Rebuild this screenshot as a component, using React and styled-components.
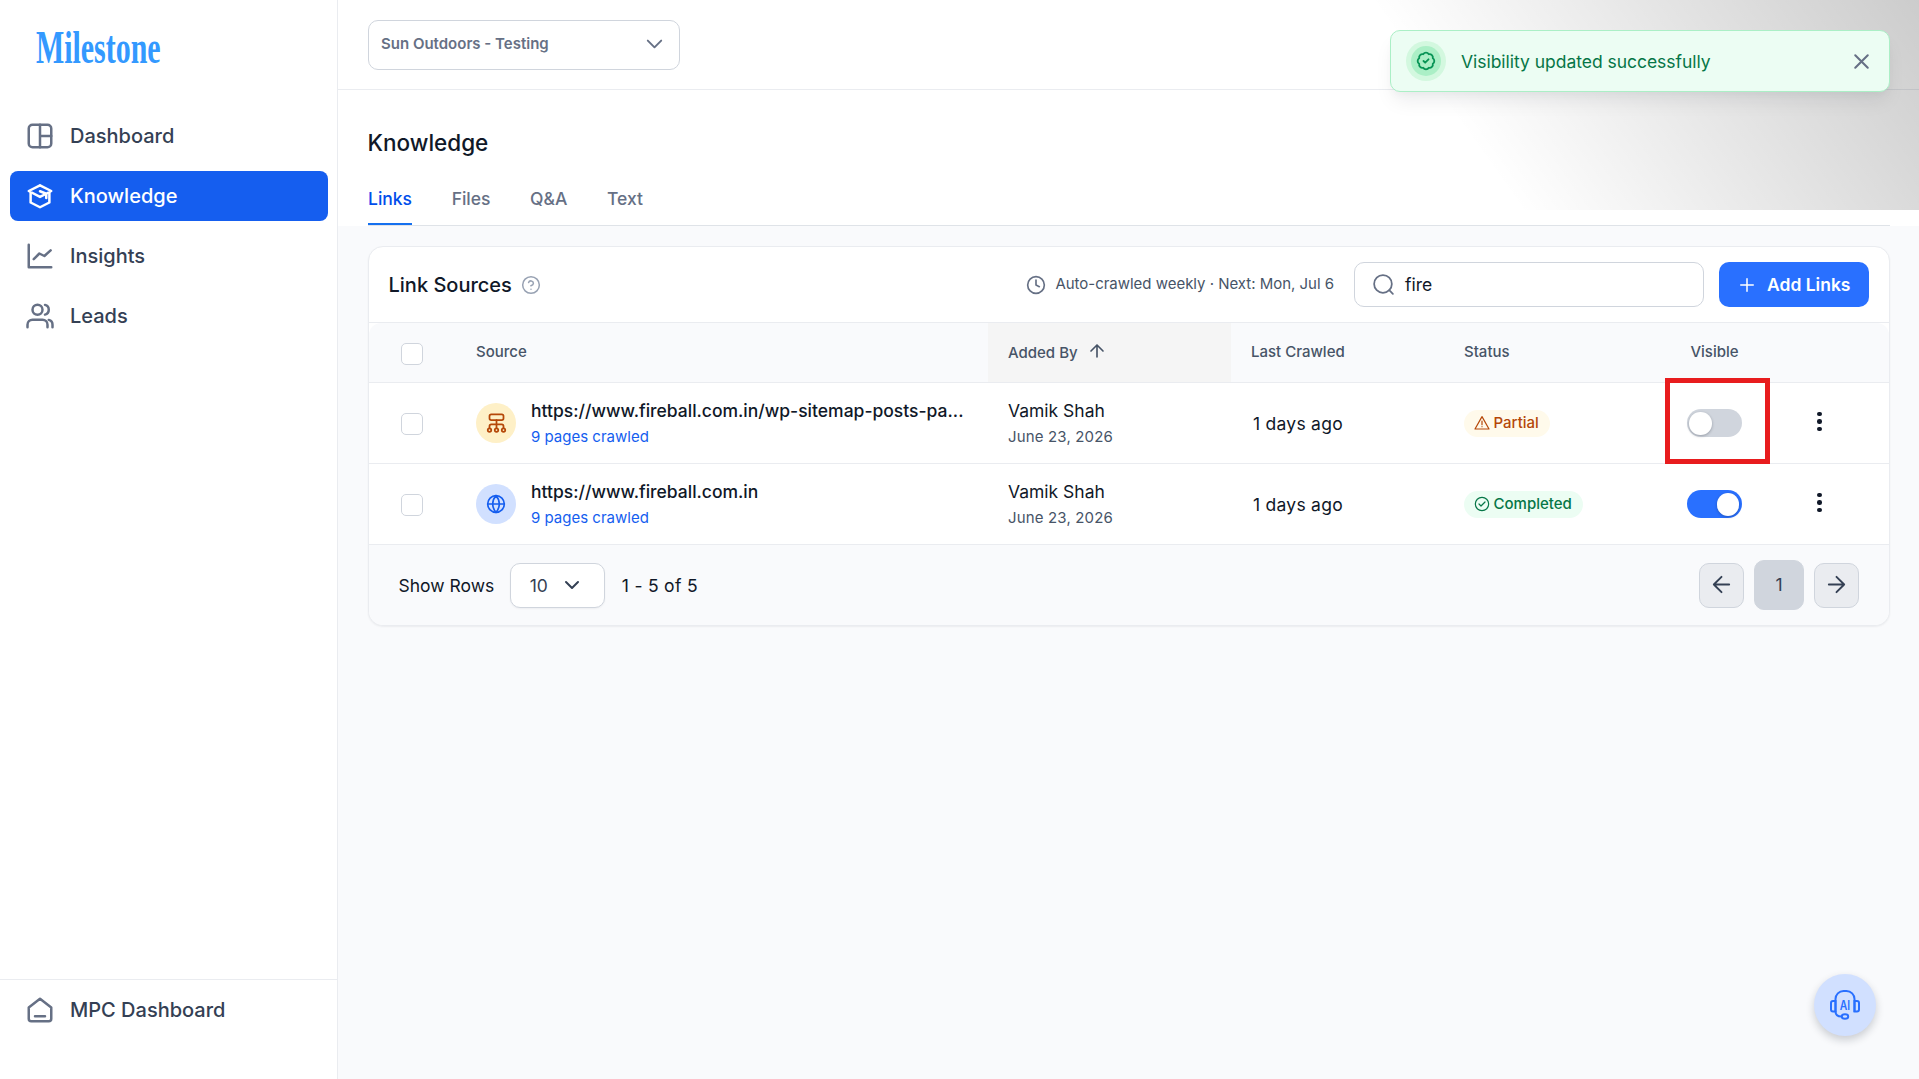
import React from 'react';
import styled, { createGlobalStyle } from 'styled-components';

const App = () => (
  <Page>
    <GlobalStyle />
    <Sidebar>
      <Logo>
        <Wordmark>Milestone</Wordmark>
      </Logo>
      <Nav>
        <NavItem>
          <Icon size={30}><rect x="3" y="3" width="18" height="18" rx="3" /><path d="M12 3v18M12 12h9" /></Icon>
          Dashboard
        </NavItem>
        <NavItem $active>
          <Icon size={30}>
            <path d="M4.500 9.500v7.700l7.500 3.800 7.500-3.800V9.500" />
            <path d="M12 3.500 3 8l9 4.700 5-2.500M12 3.500 21 8l-4 2.200M12 8.200l5 2v3.300" />
          </Icon>
          Knowledge
        </NavItem>
        <NavItem>
          <Icon size={30}><path d="M3 3v18h18" /><path d="m7 14.500 4.500-4.500 4 2 5-4.500" /></Icon>
          Insights
        </NavItem>
        <NavItem>
          <Icon size={30}>
            <path d="M22 21v-2a4 4 0 0 0-3-3.870M16 3.130a4 4 0 0 1 0 7.750" />
            <path d="M18 21v-2a4 4 0 0 0-4-4H6a4 4 0 0 0-4 4v2" /><circle cx="10" cy="7" r="4" />
          </Icon>
          Leads
        </NavItem>
      </Nav>
      <NavFooter>
        <NavItem>
          <Icon size={30}>
            <path d="M3 10 12 3l9 7v9a2 2 0 0 1-2 2H5a2 2 0 0 1-2-2zM8 17h8" />
          </Icon>
          MPC Dashboard
        </NavItem>
      </NavFooter>
    </Sidebar>
    <Main>
      <TopBar>
        <AccountSelect>
          Sun Outdoors - Testing
          <Icon size={23}><path d="m5 9 7 7 7-7" /></Icon>
        </AccountSelect>
      </TopBar>
      <PageHead>
        <Title>Knowledge</Title>
        <Tabs>
          <Tab $active>Links</Tab>
          <Tab>Files</Tab>
          <Tab>Q&amp;A</Tab>
          <Tab>Text</Tab>
        </Tabs>
      </PageHead>
      <LinkSources />
    </Main>
    <ToastShade />
    <Toast>
      <ToastBadge>
        <Icon size={20} stroke={2.2}>
          <path d="M3.850 8.620a4 4 0 0 1 4.780-4.770 4 4 0 0 1 6.740 0 4 4 0 0 1 4.780 4.780 4 4 0 0 1 0 6.740 4 4 0 0 1-4.770 4.780 4 4 0 0 1-6.750 0 4 4 0 0 1-4.780-4.770 4 4 0 0 1 0-6.760z" />
          <path d="m9 12 2 2 4-4" />
        </Icon>
      </ToastBadge>
      <ToastText>Visibility updated successfully</ToastText>
      <Icon size={25}><path d="M18 6 6 18M6 6l12 12" /></Icon>
    </Toast>
    <Highlight />
    <ChatButton>
      <svg width="32" height="32" viewBox="0 0 32 32" fill="none" stroke="#2970ff" strokeWidth="2">
        <path d="M6.500 23V10a8 8 0 0 1 8-8h3a8 8 0 0 1 8 8v13" />
        <path d="M6.500 12H4a2 2 0 0 0-2 2v6.500a2 2 0 0 0 2 2h2.500zM25.500 12H28a2 2 0 0 1 2 2v6.500a2 2 0 0 1-2 2h-2.500z" />
        <path d="M6.500 22.500c0 3.500 2.500 5 6 5" />
        <ellipse cx="16" cy="27.500" rx="3.200" ry="2.300" />
        <text x="10.800" y="20.500" textLength="10.400" lengthAdjust="spacingAndGlyphs">AI</text>
      </svg>
    </ChatButton>
  </Page>
);

export default App;

const rows = [
  {
    url: 'https://www.fireball.com.in/wp-sitemap-posts-pa...',
    kind: 'sitemap',
    status: 'Partial',
    visible: false
  },
  {
    url: 'https://www.fireball.com.in',
    kind: 'site',
    status: 'Completed',
    visible: true
  }
];

const LinkSources = () => (
  <Card>
    <CardHeader>
      <CardTitle>Link Sources</CardTitle>
      <HelpIcon>
        <Icon size={20} stroke={1.8}>
          <circle cx="12" cy="12" r="10" />
          <path d="M9.100 9a3 3 0 0 1 5.800 1c0 2-3 3-3 3M12 17h.01" />
        </Icon>
      </HelpIcon>
      <Schedule>
        <Icon size={20}><circle cx="12" cy="12" r="10" /><path d="M12 6v6l4 2" /></Icon>
        <span>Auto-crawled weekly · Next: Mon, Jul 6</span>
      </Schedule>
      <Search>
        <Icon size={25} stroke={1.7}><circle cx="11.500" cy="11.500" r="8.500" /><path d="m21 21-3.500-3.500" /></Icon>
        fire
      </Search>
      <AddButton>
        <Icon size={20} stroke={1.8}><path d="M12 4.500v15M4.500 12h15" /></Icon>
        Add Links
      </AddButton>
    </CardHeader>
    <HeadRow>
      <CheckCell><Checkbox /></CheckCell>
      <HeadCell>Source</HeadCell>
      <HeadCell $sorted>
        Added By
        <Icon size={18} stroke={2.2}><path d="M12 20V4M4 12l8-8 8 8" /></Icon>
      </HeadCell>
      <HeadCell>Last Crawled</HeadCell>
      <HeadCell>Status</HeadCell>
      <HeadCell $center>Visible</HeadCell>
      <HeadCell />
    </HeadRow>
    {rows.map(row => (
      <Row key={row.url}>
        <CheckCell><Checkbox /></CheckCell>
        <SourceCell>
          <SourceIcon $kind={row.kind}>
            {row.kind === 'sitemap' ? (
              <Icon size={21} stroke={2}>
                <rect x="4" y="1.500" width="16" height="6.500" rx="2" />
                <path d="M12 8v9M4 17v-2a2 2 0 0 1 2-2h12a2 2 0 0 1 2 2v2" />
                <circle cx="4" cy="19.500" r="2" /><circle cx="12" cy="19.500" r="2" /><circle cx="20" cy="19.500" r="2" />
              </Icon>
            ) : (
              <Icon size={20} stroke={2}>
                <circle cx="12" cy="12" r="10" />
                <path d="M2 12h20M12 2a15.300 15.300 0 0 1 4 10 15.300 15.300 0 0 1-4 10 15.300 15.300 0 0 1-4-10 15.300 15.300 0 0 1 4-10z" />
              </Icon>
            )}
          </SourceIcon>
          <Stack>
            <Url>{row.url}</Url>
            <Secondary $link>9 pages crawled</Secondary>
          </Stack>
        </SourceCell>
        <Cell>
          <Stack>
            <Primary>Vamik Shah</Primary>
            <Secondary>June 23, 2026</Secondary>
          </Stack>
        </Cell>
        <Cell><Crawled>1 days ago</Crawled></Cell>
        <Cell>
          <Badge $status={row.status}>
            {row.status === 'Partial' ? (
              <Icon size={16} stroke={1.8}>
                <path d="M12 2.500 1.500 21h21zM12 9v5.500M12 17.500h.01" />
              </Icon>
            ) : (
              <Icon size={16} stroke={1.8}><circle cx="12" cy="12" r="10" /><path d="m7.500 12 3 3 6-6" /></Icon>
            )}
            {row.status}
          </Badge>
        </Cell>
        <ToggleCell><Toggle $on={row.visible} /></ToggleCell>
        <MenuCell><Dot /><Dot /><Dot /></MenuCell>
      </Row>
    ))}
    <CardFooter>
      Show Rows
      <RowsSelect>
        10
        <Icon size={24}><path d="m6 9 6 6 6-6" /></Icon>
      </RowsSelect>
      <Range>1 - 5 of 5</Range>
      <Pager>
        <PageButton><Icon size={23}><path d="M20 12H4M12 20l-8-8 8-8" /></Icon></PageButton>
        <PageButton $current>1</PageButton>
        <PageButton><Icon size={23}><path d="M4 12h16M12 4l8 8-8 8" /></Icon></PageButton>
      </Pager>
    </CardFooter>
  </Card>
);

const Icon = ({ size, stroke = 2, children }) => (
  <svg
    width={size}
    height={size}
    viewBox="0 0 24 24"
    fill="none"
    stroke="currentColor"
    strokeWidth={stroke}
    strokeLinecap="round"
    strokeLinejoin="round"
  >
    {children}
  </svg>
);

const GlobalStyle = createGlobalStyle`
  * {
    box-sizing: border-box;
  }
  body {
    margin: 0;
    overflow: hidden;
    background: #f9fafb;
    font-family: Inter, "Liberation Sans", sans-serif;
    color: #101828;
  }
  svg {
    flex: none;
  }
`;

const Page = styled.div`
  display: flex;
  height: 1079px;
  background: #f9fafc;
`;

const Sidebar = styled.aside`
  display: flex;
  flex-direction: column;
  width: 338px;
  border-right: 1px solid #eaecf0;
  background: #fff;
`;

const Logo = styled.div`
  height: 111px;
  padding: 23px 0 0 36px;
`;

const Wordmark = styled.div`
  width: max-content;
  font-family: "Liberation Serif", serif;
  font-size: 46px;
  font-weight: 700;
  line-height: 50px;
  color: #3399ff;
  transform: scaleX(0.65);
  transform-origin: left;
`;

const Nav = styled.nav`
  display: flex;
  flex-direction: column;
  flex: 1;
  gap: 10px;
  padding: 0 9px 0 10px;
`;

const NavItem = styled.div`
  display: flex;
  align-items: center;
  gap: 15px;
  height: 50px;
  padding: 0 15px;
  border-radius: 8px;
  font-size: 20px;
  font-weight: 500;
  color: ${props => (props.$active ? '#fff' : '#344054')};
  background: ${props => (props.$active ? '#155eef' : 'transparent')};

  svg {
    color: ${props => (props.$active ? '#fff' : '#667085')};
  }
`;

const NavFooter = styled.div`
  height: 100px;
  padding: 5px 10px;
  border-top: 1px solid #eaecf0;
`;

const Main = styled.main`
  flex: 1;
`;

const TopBar = styled.header`
  height: 90px;
  padding: 20px 30px;
  border-bottom: 1px solid #eaecf0;
  background: #fff;
`;

const AccountSelect = styled.div`
  display: flex;
  align-items: center;
  justify-content: space-between;
  width: 312px;
  height: 50px;
  padding: 0 13px 3px 12px;
  border: 1px solid #d0d5dd;
  border-radius: 10px;
  font-size: 15px;
  font-weight: 600;
  color: #667085;
`;

const PageHead = styled.div`
  height: 136px;
  padding: 36px 29px 0 30px;
  background: #fff;
`;

const Title = styled.h1`
  margin: 0 0 0 -0.5px;
  font-size: 22.5px;
  font-weight: 500;
  line-height: 34px;
`;

const Tabs = styled.div`
  display: flex;
  gap: 39.6px;
  height: 66px;
  border-bottom: 1px solid #dfe3e8;
`;

const Tab = styled.div`
  height: 65px;
  padding-top: 27px;
  font-size: 17.5px;
  font-weight: 500;
  line-height: 24px;
  color: ${props => (props.$active ? '#004eeb' : '#667085')};
  border-bottom: 2px solid ${props => (props.$active ? '#1570ef' : 'transparent')};
`;

const Card = styled.section`
  width: 1522px;
  margin: 20px 0 0 30px;
  overflow: hidden;
  border: 1px solid #eaecf0;
  border-radius: 15px;
  background: #fff;
  box-shadow: 0 1px 2px rgba(16, 24, 40, 0.06);
`;

const CardHeader = styled.div`
  display: flex;
  align-items: center;
  height: 76px;
  padding: 0 20px 0 19.5px;
  border-bottom: 1px solid #eaecf0;
`;

const CardTitle = styled.h2`
  margin: 0 9px 0 0;
  font-size: 20px;
  font-weight: 500;
`;

const HelpIcon = styled.span`
  display: flex;
  color: #98a2b3;
`;

const Schedule = styled.div`
  display: flex;
  align-items: center;
  gap: 9.5px;
  margin-left: auto;
  font-size: 15px;
  letter-spacing: -0.02px;
  color: #475467;

  svg {
    color: #667085;
  }
  span {
    padding-bottom: 2px;
  }
`;

const Search = styled.div`
  display: flex;
  align-items: center;
  gap: 9px;
  width: 350px;
  height: 45px;
  margin: 0 15px 0 20px;
  padding: 0 16px;
  border: 1px solid #d0d5dd;
  border-radius: 10px;
  font-size: 17.5px;

  svg {
    color: #667085;
  }
`;

const AddButton = styled.div`
  display: flex;
  align-items: center;
  gap: 10px;
  width: 150px;
  height: 45px;
  padding-left: 18px;
  border-radius: 10px;
  font-size: 17.5px;
  font-weight: 600;
  color: #fff;
  background: #2970ff;
`;

const Grid = styled.div`
  display: grid;
  grid-template-columns: 87px 532px 243px 213px 213px 115px 117px;
  border-bottom: 1px solid #eaecf0;
`;

const HeadRow = styled(Grid)`
  height: 60px;
  border-radius: 12px 12px 0 0;
  background: #f9fafc;
`;

const HeadCell = styled.div`
  display: flex;
  align-items: center;
  justify-content: ${props => (props.$center ? 'center' : 'flex-start')};
  gap: 10px;
  padding: 0 20px ${props => (props.$sorted ? '0' : '2px')};
  font-size: 15px;
  font-weight: 500;
  color: #475467;
  background: ${props => (props.$sorted ? '#f5f5f5' : 'transparent')};

  svg {
    margin-bottom: 3px;
  }
`;

const Row = styled(Grid)`
  height: 81px;
`;

const Cell = styled.div`
  display: flex;
  align-items: center;
  padding: 0 20px;
`;

const CheckCell = styled(Cell)`
  padding: 2px 0 0 32px;
`;

const Checkbox = styled.span`
  width: 22px;
  height: 22px;
  border: 1px solid #d0d5dd;
  border-radius: 5px;
  background: #fff;
`;

const SourceCell = styled(Cell)`
  gap: 15px;
`;

const SourceIcon = styled.span`
  display: flex;
  align-items: center;
  justify-content: center;
  width: 40px;
  height: 40px;
  border-radius: 50%;
  color: ${props => (props.$kind === 'sitemap' ? '#b54708' : '#155eef')};
  background: ${props => (props.$kind === 'sitemap' ? '#fef0c7' : '#d1e0ff')};
`;

const Stack = styled.div`
  display: flex;
  flex-direction: column;
  gap: 2px;
`;

const Primary = styled.div`
  font-size: 17.5px;
  line-height: 25px;
  white-space: nowrap;
`;

const Url = styled(Primary)`
  font-weight: 500;
`;

const Secondary = styled.div`
  font-size: 15px;
  line-height: 24px;
  letter-spacing: ${props => (props.$link ? '0' : '0.15px')};
  color: ${props => (props.$link ? '#155eef' : '#475467')};
`;

const Crawled = styled.span`
  padding-left: 2px;
  font-size: 17.5px;
  letter-spacing: 0.25px;
`;

const Badge = styled.span`
  display: flex;
  align-items: center;
  gap: 3.5px;
  height: 27px;
  padding: 0 11px 1px 10px;
  border-radius: 14px;
  font-size: 15px;
  font-weight: 500;
  color: ${props => (props.$status === 'Partial' ? '#b54708' : '#067647')};
  background: ${props => (props.$status === 'Partial' ? '#fffaeb' : '#ecfdf3')};
`;

const ToggleCell = styled(Cell)`
  justify-content: center;
`;

const Toggle = styled.span`
  display: flex;
  justify-content: ${props => (props.$on ? 'flex-end' : 'flex-start')};
  width: 55px;
  height: 28px;
  padding: 3px 3px 3px 2px;
  border-radius: 14px;
  background: ${props => (props.$on ? '#2970ff' : '#d0d5dd')};

  &::after {
    content: '';
    width: 22.5px;
    height: 22.5px;
    border-radius: 50%;
    background: #fff;
    box-shadow: 0 1px 3px rgba(16, 24, 40, 0.3);
  }
`;

const MenuCell = styled.div`
  display: flex;
  flex-direction: column;
  align-items: center;
  justify-content: center;
  gap: 3px;
  padding: 0 22px 3px 0;
`;

const Dot = styled.i`
  width: 4.5px;
  height: 4.5px;
  border-radius: 50%;
  background: #101828;
`;

const CardFooter = styled.div`
  display: flex;
  align-items: center;
  height: 80px;
  padding: 0 30px 0 29.5px;
  font-size: 17.5px;
  background: #f9fafc;
`;

const RowsSelect = styled.div`
  display: flex;
  align-items: center;
  gap: 12px;
  width: 95px;
  height: 45px;
  margin: 0 17px 0 15.5px;
  padding-left: 19px;
  border: 1px solid #d0d5dd;
  border-radius: 10px;
  color: #344054;
  background: #fff;
  box-shadow: 0 1px 2px rgba(16, 24, 40, 0.05);
`;

const Range = styled.span`
  letter-spacing: 0.3px;
`;

const Pager = styled.div`
  display: flex;
  align-items: center;
  gap: 10px;
  margin-left: auto;
`;

const PageButton = styled.div`
  display: flex;
  align-items: center;
  justify-content: center;
  width: ${props => (props.$current ? '50px' : '45px')};
  height: ${props => (props.$current ? '50px' : '45px')};
  padding-bottom: 2px;
  border: 1px solid #d0d5dd;
  border-radius: 10px;
  color: #344054;
  background: ${props => (props.$current ? '#d0d5dd' : '#eaecf0')};
`;

const ToastShade = styled.div`
  position: absolute;
  top: 0;
  right: 0;
  width: 560px;
  height: 210px;
  background: linear-gradient(234.5deg, rgba(0, 0, 0, 0.2), transparent 447px);
`;

const Toast = styled.div`
  position: absolute;
  top: 30px;
  right: 29px;
  display: flex;
  align-items: center;
  width: 500px;
  height: 62px;
  padding: 0 15px 0 20px;
  border: 1px solid #abefc6;
  border-radius: 10px;
  color: #667085;
  background: #ecfdf3;
  box-shadow: 0 12px 20px -4px rgba(16, 24, 40, 0.08), 0 5px 8px -2px rgba(16, 24, 40, 0.03);
`;

const ToastBadge = styled.span`
  display: flex;
  align-items: center;
  justify-content: center;
  width: 30px;
  height: 30px;
  border-radius: 50%;
  color: #079455;
  background: #abefc6;
  box-shadow: 0 0 0 5px #d3f8df;
`;

const ToastText = styled.span`
  flex: 1;
  margin-left: 20px;
  font-size: 17.5px;
  letter-spacing: -0.03px;
  color: #067647;
`;

/* red frame around the toggle that was just switched */
const Highlight = styled.div`
  position: absolute;
  top: 377.5px;
  left: 1664.5px;
  width: 105px;
  height: 86px;
  border: 5px solid #e81c1e;
`;

const ChatButton = styled.div`
  position: absolute;
  top: 974px;
  left: 1814px;
  display: flex;
  align-items: center;
  justify-content: center;
  width: 62px;
  height: 62px;
  border-radius: 50%;
  background: #d1e0ff;
  box-shadow: 0 4px 8px rgba(16, 24, 40, 0.2);

  text {
    fill: #2970ff;
    stroke: none;
    font-size: 12.5px;
    font-weight: 600;
  }
`;
